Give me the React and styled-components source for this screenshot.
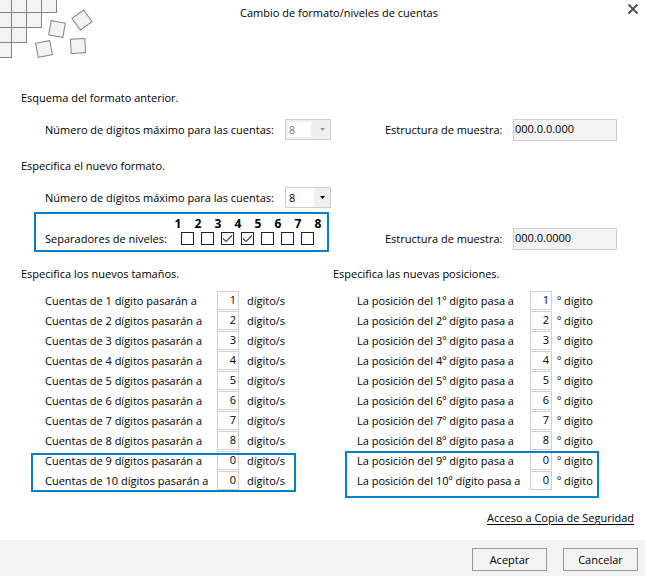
import React, { useState } from 'react';
import styled, { createGlobalStyle, css } from 'styled-components';

const BLUE = '#0480c6';
const LINE = '#cfcfcf';
const FONT = '"Open Sans", "Noto Sans", sans-serif';

const GlobalStyle = createGlobalStyle`
  *, *::before, *::after { box-sizing: border-box; }
  body { margin: 0; background: #fff; }
  input, select, button { font: inherit; color: inherit; margin: 0; border-radius: 0; }
`;

const Dialog = styled.form`
  display: flex;
  flex-direction: column;
  min-height: 100vh;
  font-family: ${FONT};
  font-size: 11px;
  line-height: 20px;
  color: #000;
  white-space: nowrap;
`;

const Header = styled.header`
  display: grid;
  grid-template-columns: 96px 1fr 63px;
  align-items: start;
  height: 88px;
`;

const Art = styled.svg`
  display: block;
  width: 96px;
  height: 62px;
  fill: #f3f3f3;
  stroke: #848484;
  stroke-width: 1;
`;

const Title = styled.h1`
  margin: 3px 0 0;
  font-size: 11px;
  font-weight: 400;
  text-align: center;
`;

const CloseButton = styled.button`
  display: flex;
  justify-self: end;
  margin: 3px 6px 0 0;
  padding: 0;
  border: 0;
  background: none;
`;

const Main = styled.main`
  padding-left: 21px;
`;

const Heading = styled.h2`
  margin: 0;
  font-size: 11px;
  font-weight: 400;
`;

const Columns = styled.div`
  display: grid;
  grid-template-columns: 1fr 1fr;
  align-items: ${(p) => p.$align || 'start'};
`;

const Block = styled.section`
  margin-bottom: ${(p) => p.$after || 0}px;
`;

const Field = styled.div`
  display: grid;
  grid-template-columns: ${(p) => p.$label}px auto;
  justify-content: start;
  align-items: center;
  padding-left: ${(p) => p.$indent}px;
  padding-bottom: ${(p) => p.$below || 0}px;
`;

const FormRow = styled(Columns)`
  margin-top: 11px;
`;

const SelectBox = styled.div`
  position: relative;
  width: 46px;
  height: 22px;

  svg {
    position: absolute;
    right: 6px;
    top: 9px;
    pointer-events: none;
    fill: ${(p) => (p.$disabled ? '#999' : '#000')};
  }
`;

const Select = styled.select`
  display: block;
  appearance: none;
  width: 100%;
  height: 21px;
  padding: 0 0 0 3px;
  border: 1px solid ${LINE};
  background: linear-gradient(#efefef, #efefef) right / 16px 100% no-repeat #fff;

  &:disabled {
    color: #777;
    opacity: 1;
    background: linear-gradient(#fff, #fff) 2px 2px / 23px 15px no-repeat #efefef;
  }
`;

const Sample = styled.input`
  width: 104px;
  height: 22px;
  padding: 0 1px 3px;
  border: 1px solid ${LINE};
  background: #f3f3f3;
  outline: none;
`;

const Levels = styled.div`
  display: grid;
  grid-template-columns: 132px auto;
  justify-content: start;
  width: 295px;
  height: 40px;
  margin: 3px 0 0 13px;
  padding-left: 9px;
  border: 2px solid ${BLUE};
`;

const LevelsLabel = styled.span`
  align-self: end;
  padding-bottom: 1px;
`;

const LevelNumbers = styled.div`
  display: grid;
  grid-template-columns: repeat(8, 20px);
  margin-left: -9px;
  height: 18px;
  font-size: 12px;
  font-weight: 700;
  text-align: center;
`;

const LevelChecks = styled.div`
  display: flex;
  gap: 7px;
  padding-left: 4px;
`;

const CheckBox = styled.label`
  position: relative;
  width: 13px;
  height: 13px;

  input {
    display: block;
    appearance: none;
    width: 13px;
    height: 13px;
    border: 1px solid #222;
    background: #fff;
  }

  svg {
    position: absolute;
    inset: 0;
    visibility: hidden;
    pointer-events: none;
  }

  input:checked + svg { visibility: visible; }
`;

const DigitGroup = styled.div`
  position: relative;

  ${(p) => p.$frame && css`
    &::after {
      content: '';
      position: absolute;
      inset: ${p.$frame};
      border: 2px solid ${BLUE};
      pointer-events: none;
    }
  `}
`;

const DigitRow = styled.div`
  display: grid;
  grid-template-columns: ${(p) => p.$label}px 22px auto;
  justify-content: start;
  height: 20px;
  padding-left: 24px;
`;

const DigitInput = styled.input`
  width: 22px;
  height: 19px;
  padding: 0 2px 1px 0;
  border: 1px solid ${LINE};
  background: #fff;
  text-align: right;
`;

const Suffix = styled.span`
  padding-left: ${(p) => p.$gap}px;
`;

const LinkRow = styled.div`
  display: flex;
  justify-content: flex-end;
  padding: 17px 11px 12px 0;
`;

const BackupLink = styled.a`
  color: #000;
  text-decoration: underline;
  text-underline-offset: 2px;
`;

const Footer = styled.footer`
  display: flex;
  justify-content: flex-end;
  gap: 16px;
  margin-top: auto;
  padding: 8px 7px 5px;
  background: #f3f3f3;
`;

const Action = styled.button`
  width: 75px;
  height: 23px;
  padding: 0;
  border: 1px solid #999;
  background: #f3f3f3;
`;

const LOOSE_TILES = [
  [57, 29, 10],
  [82, 20, -36],
  [44, 49, -11],
  [78, 46, -3],
];

function Tiles() {
  return (
    <Art viewBox="0 0 96 62" aria-hidden="true">
      {[4, 3, 2, 1].map((count, row) =>
        Array.from({ length: count }, (_, col) => (
          <rect key={`${row}-${col}`} x={col * 15 - 3.5} y={row * 15 - 2.5} width="15" height="15" />
        ))
      )}
      {LOOSE_TILES.map(([x, y, angle]) => (
        <rect key={x} x="-7.2" y="-7.2" width="14.4" height="14.4" transform={`translate(${x} ${y}) rotate(${angle})`} />
      ))}
    </Art>
  );
}

function MaxDigits({ id, disabled }) {
  return (
    <Field $label={240} $indent={24}>
      <label htmlFor={id}>Número de dígitos máximo para las cuentas:</label>
      <SelectBox $disabled={disabled}>
        <Select id={id} defaultValue="8" disabled={disabled}>
          {[4, 5, 6, 7, 8, 9, 10].map((n) => <option key={n}>{n}</option>)}
        </Select>
        <svg width="5" height="3" viewBox="0 0 5 3"><path d="M0 0h5L2.5 3z" /></svg>
      </SelectBox>
    </Field>
  );
}

function SampleField({ id, value, below }) {
  return (
    <Field $label={128} $indent={52} $below={below}>
      <label htmlFor={id}>Estructura de muestra:</label>
      <Sample id={id} value={value} readOnly />
    </Field>
  );
}

function Separators() {
  const [active, setActive] = useState([3, 4]);
  const toggle = (n) =>
    setActive(active.includes(n) ? active.filter((v) => v !== n) : [...active, n]);
  return (
    <Levels role="group" aria-labelledby="levels">
      <LevelsLabel id="levels">Separadores de niveles:</LevelsLabel>
      <div>
        <LevelNumbers>
          {[1, 2, 3, 4, 5, 6, 7, 8].map((n) => <span key={n}>{n}</span>)}
        </LevelNumbers>
        <LevelChecks>
          {[1, 2, 3, 4, 5, 6, 7].map((n) => (
            <CheckBox key={n}>
              <input
                type="checkbox"
                aria-label={`Separador ${n}`}
                checked={active.includes(n)}
                onChange={() => toggle(n)}
              />
              <svg width="13" height="13" viewBox="0 0 13 13">
                <path d="M2 6.5l3 3 6-6" fill="none" stroke="#444" strokeWidth="1.2" />
              </svg>
            </CheckBox>
          ))}
        </LevelChecks>
      </div>
    </Levels>
  );
}

const VALUES = [1, 2, 3, 4, 5, 6, 7, 8, 0, 0];

function DigitRows({ name, text, suffix, label, gap, frame }) {
  const row = (value, i) => (
    <DigitRow key={i} $label={label}>
      <label htmlFor={`${name}${i}`}>{text(i + 1)}</label>
      <DigitInput id={`${name}${i}`} defaultValue={value} />
      <Suffix $gap={gap}>{suffix}</Suffix>
    </DigitRow>
  );
  return (
    <>
      <DigitGroup>{VALUES.slice(0, 8).map(row)}</DigitGroup>
      <DigitGroup $frame={frame}>{VALUES.slice(8).map((v, i) => row(v, i + 8))}</DigitGroup>
    </>
  );
}

export default function App() {
  return (
    <>
      <GlobalStyle />
      <Dialog onSubmit={(e) => e.preventDefault()}>
        <Header>
          <Tiles />
          <Title>Cambio de formato/niveles de cuentas</Title>
          <CloseButton type="button" aria-label="Cerrar">
            <svg width="12" height="12" viewBox="0 0 12 12">
              <path d="M1.5 1.5l9 9M10.5 1.5l-9 9" stroke="#555" strokeWidth="2" />
            </svg>
          </CloseButton>
        </Header>
        <Main>
          <Block $after={15}>
            <Heading>Esquema del formato anterior.</Heading>
            <FormRow>
              <MaxDigits id="oldMax" disabled />
              <SampleField id="oldSample" value="000.0.0.000" />
            </FormRow>
          </Block>
          <Block $after={12}>
            <Heading>Especifica el nuevo formato.</Heading>
            <FormRow>
              <MaxDigits id="newMax" />
            </FormRow>
            <Columns $align="end">
              <Separators />
              <SampleField id="newSample" value="000.0.0000" below={2} />
            </Columns>
          </Block>
          <Columns>
            <section>
              <Block $after={7}><Heading>Especifica los nuevos tamaños.</Heading></Block>
              <DigitRows
                name="size"
                text={(n) => `Cuentas de ${n} dígito${n > 1 ? 's' : ''} pasarán a`}
                suffix="dígito/s"
                label={172}
                gap={8}
                frame="2px 37px -1px 10px"
              />
            </section>
            <section>
              <Block $after={7}><Heading>Especifica las nuevas posiciones.</Heading></Block>
              <DigitRows
                name="position"
                text={(n) => `La posición del ${n}º dígito pasa a`}
                suffix="º dígito"
                label={173}
                gap={5}
                frame="0 46px -7px 12px"
              />
            </section>
          </Columns>
        </Main>
        <LinkRow><BackupLink href="#copia">Acceso a Copia de Seguridad</BackupLink></LinkRow>
        <Footer>
          <Action type="submit">Aceptar</Action>
          <Action type="button">Cancelar</Action>
        </Footer>
      </Dialog>
    </>
  );
}
